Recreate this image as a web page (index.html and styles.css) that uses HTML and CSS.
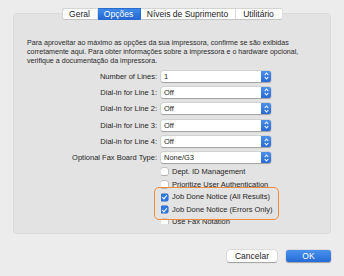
FILE: index.html
```html
<!DOCTYPE html>
<html lang="pt">
<head>
  <meta charset="UTF-8" />
  <title>Opções</title>
  <link rel="stylesheet" href="styles.css">
</head>
<body>
  <div class="sheet">
    <div class="tabs">
      <div class="tab">Geral</div>
      <div class="tab active">Opções</div>
      <div class="tab">Níveis de Suprimento</div>
      <div class="tab">Utilitário</div>
    </div>

    <div class="panel">
      <p class="intro">Para aproveitar ao máximo as opções da sua impressora, confirme se são exibidas corretamente aqui. Para obter informações sobre a impressora e o hardware opcional, verifique a documentação da impressora.</p>

      <div class="form">
        <label class="field-label">Number of Lines:</label>
        <div class="select"><span>1</span><i class="stepper"></i></div>

        <label class="field-label">Dial-in for Line 1:</label>
        <div class="select"><span>Off</span><i class="stepper"></i></div>

        <label class="field-label">Dial-in for Line 2:</label>
        <div class="select"><span>Off</span><i class="stepper"></i></div>

        <label class="field-label">Dial-in for Line 3:</label>
        <div class="select"><span>Off</span><i class="stepper"></i></div>

        <label class="field-label">Dial-in for Line 4:</label>
        <div class="select"><span>Off</span><i class="stepper"></i></div>

        <label class="field-label">Optional Fax Board Type:</label>
        <div class="select"><span>None/G3</span><i class="stepper"></i></div>
      </div>

      <div class="checks">
        <div class="check-list">
          <div class="check"><i class="box"></i>Dept. ID Management</div>
          <div class="check"><i class="box"></i>Prioritize User Authentication</div>
          <div class="check"><i class="box on"></i>Job Done Notice (All Results)</div>
          <div class="check"><i class="box on"></i>Job Done Notice (Errors Only)</div>
          <div class="check"><i class="box"></i>Use Fax Notation</div>
        </div>
        <div class="highlight"></div>
      </div>
    </div>

    <div class="actions">
      <button class="btn">Cancelar</button>
      <button class="btn primary">OK</button>
    </div>
  </div>
</body>
</html>
```

FILE: styles.css
```css
* {
  margin: 0;
  padding: 0;
  box-sizing: border-box;
}

body {
  background: #ececec;
  font-family: 'Liberation Sans', Arial, sans-serif;
  font-size: 7.5px;
  color: #262626;
  width: 344px;
  height: 276px;
  overflow: hidden;
}

.sheet {
  padding: 8px 13px 0 13px;
}

/* segmented tab control */
.tabs {
  display: flex;
  justify-content: center;
  position: relative;
  z-index: 2;
  margin-bottom: -7px;
}

.tab {
  height: 12px;
  line-height: 10.5px;
  font-size: 8.5px;
  text-align: center;
  background: #fff;
  border-top: 1px solid #d4d4d4;
  border-bottom: 1px solid #c4c4c4;
  border-right: 1px solid #dcdcdc;
  color: #222;
}

.tab:nth-child(1) { width: 36px; border-left: 1px solid #d4d4d4; border-radius: 3px 0 0 3px; }
.tab:nth-child(2) { width: 43px; }
.tab:nth-child(3) { width: 95px; }
.tab:nth-child(4) { width: 47px; border-radius: 0 3px 3px 0; }

.tab.active {
  background: linear-gradient(#3f8be8, #2568d2);
  color: #fff;
  border-color: #2a6bd0;
}

.panel {
  background: #e3e3e3;
  border: 1px solid #dadada;
  border-radius: 4px;
  height: 221px;
  padding: 24.5px 13px 0 13px;
}

.intro {
  font-size: 7.1px;
  line-height: 9px;
  color: #2a2a2a;
  margin-bottom: 5px;
}

.form {
  display: grid;
  grid-template-columns: 130px 110px;
  column-gap: 4px;
  row-gap: 5.4px;
  align-items: center;
}

.field-label {
  text-align: right;
  line-height: 11px;
}

.select {
  height: 11px;
  background: #fff;
  border-radius: 2px;
  box-shadow: 0 0.5px 1px rgba(0,0,0,0.25), 0 0 0 0.5px rgba(0,0,0,0.1);
  display: flex;
  align-items: center;
  justify-content: space-between;
  padding-left: 3px;
  line-height: 11px;
}

.stepper {
  width: 10px;
  height: 11px;
  border-radius: 0 2px 2px 0;
  background: linear-gradient(#4a90ea, #2a6bd3);
  position: relative;
}

.stepper::before,
.stepper::after {
  content: '';
  position: absolute;
  left: 3.5px;
  width: 2px;
  height: 2px;
  border-left: 1px solid #fff;
  border-top: 1px solid #fff;
}

.stepper::before { top: 2.5px; transform: rotate(45deg); }
.stepper::after { bottom: 2.5px; transform: rotate(225deg); }

.checks {
  position: relative;
  margin-top: 2.7px;
  margin-left: 134px;
}

.check-list {
  height: 58.3px;
  overflow: hidden;
  display: flex;
  flex-direction: column;
  gap: 5px;
  padding-top: 2px;
}

.check {
  display: flex;
  align-items: center;
  height: 7.6px;
  line-height: 8px;
  white-space: nowrap;
}

.box {
  width: 7px;
  height: 7px;
  border-radius: 1.5px;
  background: #fff;
  box-shadow: 0 0 0 0.5px rgba(0,0,0,0.25), 0 0.5px 1px rgba(0,0,0,0.2);
  margin-right: 4px;
  flex: none;
  position: relative;
}

.box.on {
  background: #2f78e0;
  box-shadow: 0 0 0 0.5px #2463c4;
}

.box.on::after {
  content: '';
  position: absolute;
  left: 2.3px;
  top: 0.6px;
  width: 2px;
  height: 4px;
  border-right: 1px solid #fff;
  border-bottom: 1px solid #fff;
  transform: rotate(40deg);
}

.highlight {
  position: absolute;
  left: -7px;
  top: 20.8px;
  width: 125px;
  height: 33px;
  border: 1.5px solid #f28b3b;
  border-radius: 5px;
}

.actions {
  display: flex;
  justify-content: flex-end;
  gap: 9px;
  margin-top: 16px;
}

.btn {
  font-family: inherit;
  font-size: 8.5px;
  height: 12px;
  border: none;
  border-radius: 2.5px;
  background: #fff;
  color: #222;
  box-shadow: 0 0.5px 1px rgba(0,0,0,0.3), 0 0 0 0.5px rgba(0,0,0,0.08);
  width: 50px;
}

.btn.primary {
  width: 45px;
  background: linear-gradient(#4a92ec, #256bd6);
  color: #fff;
}
```
